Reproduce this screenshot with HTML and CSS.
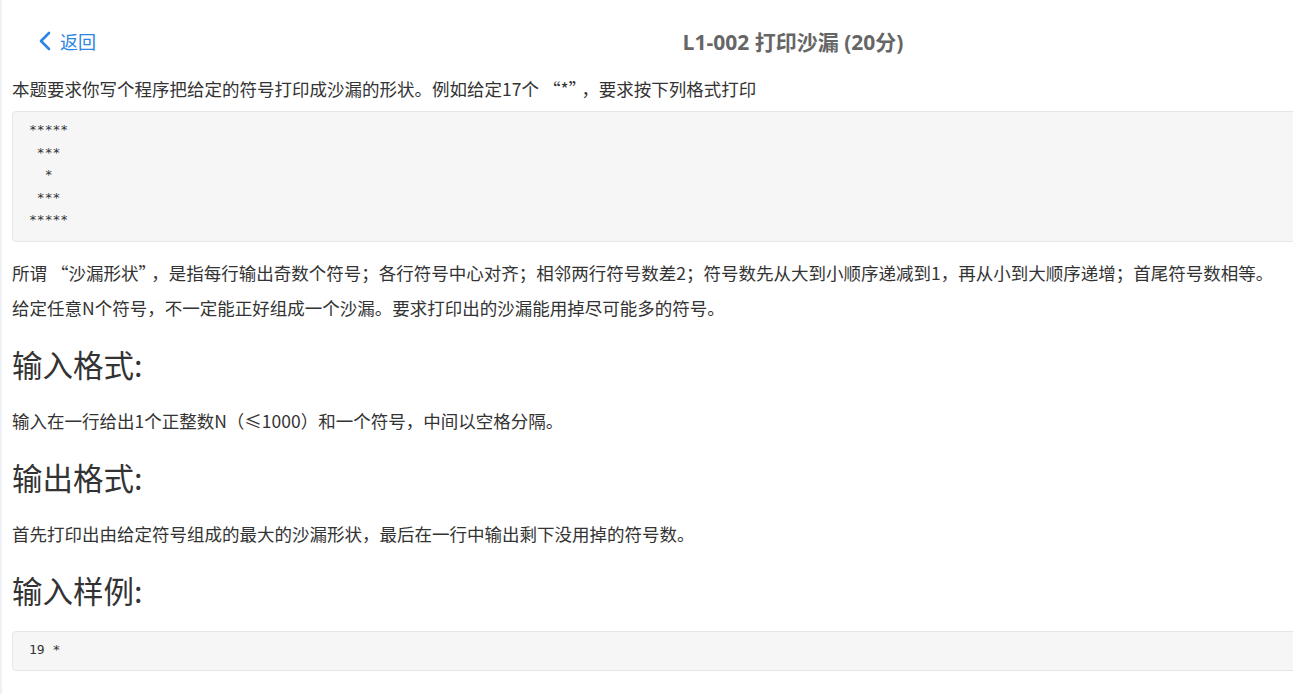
FILE: index.html
```html
<!DOCTYPE html>
<html lang="zh-CN">
<head>
    <meta charset="UTF-8">
    <meta name="viewport" content="width=device-width, initial-scale=1.0">
    <title>L1-002 打印沙漏</title>
    <link rel="stylesheet" href="styles.css">
</head>
<body>
    <div class="page">
        <div class="header">
            <a class="back" href="#">
                <svg class="back-icon" width="14" height="20" viewBox="0 0 14 20">
                    <path d="M11 2 L3 10 L11 18" fill="none" stroke="currentColor" stroke-width="2.6" stroke-linecap="round" stroke-linejoin="round"/>
                </svg>
                <span>返回</span>
            </a>
            <h1 class="title">L1-002 打印沙漏 (20分)</h1>
            <div></div>
        </div>

        <div class="content">
            <p>本题要求你写个程序把给定的符号打印成沙漏的形状。例如给定17个<span class="lq">“</span>*<span class="rq">”</span>，要求按下列格式打印</p>
<pre class="code">*****
 ***
  *
 ***
*****</pre>
            <p>所谓<span class="lq">“</span>沙漏形状<span class="rq">”</span>，是指每行输出奇数个符号；各行符号中心对齐；相邻两行符号数差2；符号数先从大到小顺序递减到1，再从小到大顺序递增；首尾符号数相等。</p>
            <p>给定任意N个符号，不一定能正好组成一个沙漏。要求打印出的沙漏能用掉尽可能多的符号。</p>

            <h3>输入格式:</h3>
            <p>输入在一行给出1个正整数N（≤1000）和一个符号，中间以空格分隔。</p>

            <h3>输出格式:</h3>
            <p>首先打印出由给定符号组成的最大的沙漏形状，最后在一行中输出剩下没用掉的符号数。</p>

            <h3>输入样例:</h3>
<pre class="code">19 *</pre>
        </div>
    </div>
</body>
</html>
```

FILE: styles.css
```css
html, body {
    margin: 0;
    padding: 0;
    overflow: hidden;
    background: #fff;
}
body {
    font-family: "Noto Sans CJK SC", "Noto Sans", sans-serif;
    color: #333;
}
.page {
    width: 1582px;
    border-left: 2px solid #eef1f5;
    min-height: 694px;
}
.header {
    display: grid;
    grid-template-columns: 1fr auto 1fr;
    align-items: center;
    height: 34px;
    padding: 24px 0 0 0;
    margin-bottom: 18px;
}
.back {
    display: flex;
    align-items: center;
    gap: 8px;
    margin-left: 36px;
    color: #2b85e4;
    text-decoration: none;
    font-size: 18px;
}
.back-icon {
    display: block;
}
.title {
    margin: 0;
    font-family: "Open Sans", "Noto Sans CJK SC", sans-serif;
    font-size: 21px;
    font-weight: bold;
    color: #666;
}
.content {
    padding: 0 10px;
}
p {
    margin: 0 0 9px;
    font-size: 17.5px;
    line-height: 26px;
}
/* widen the curly quotes to full-width cells */
.lq {
    padding-left: 4px;
}
.rq {
    padding-right: 4px;
}
h3 {
    margin: 23px 0 21px;
    font-size: 30.5px;
    font-weight: normal;
    line-height: 40px;
    color: #333;
}
h3 + p {
    margin-top: 24px;
}
.code {
    margin: 6px 0 18px;
    padding: 7px 16px 9px;
    background: #f6f6f6;
    border: 1px solid #e6e6e6;
    border-radius: 4px;
    font-family: "DejaVu Sans Mono", "Liberation Mono", monospace;
    font-size: 13px;
    line-height: 22.5px;
    color: #333;
}
h3 + .code {
    margin-top: 0;
}
```
